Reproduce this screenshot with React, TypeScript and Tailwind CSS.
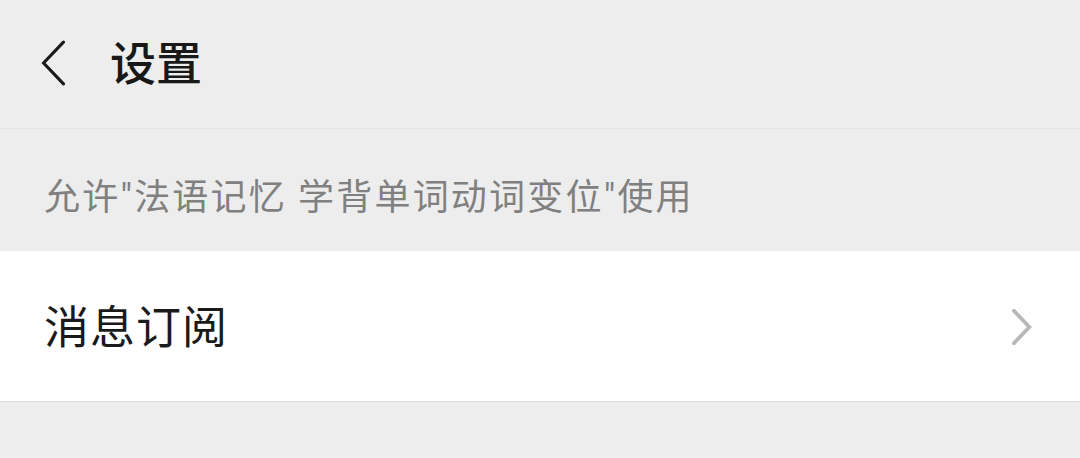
const font = { fontFamily: "Roboto, 'Noto Sans CJK SC', sans-serif" };

// Plain stroked chevron used for the back button and row arrows
const Chevron = ({ dir, className }: { dir: "left" | "right"; className?: string }) => (
  <svg viewBox="0 0 24 44" className={className} fill="none" stroke="currentColor" strokeLinecap="round" strokeLinejoin="miter">
    {dir === "left" ? <polyline points="22,2 3,22 22,42" /> : <polyline points="2,2 21,22 2,42" />}
  </svg>
);

const App: React.FC = () => {
  return (
    <div className="w-[1080px] h-[458px] bg-[#ededed] overflow-hidden" style={font}>
      {/* Top bar */}
      <div className="h-[129px] flex items-center border-b border-[#e2e2e2]">
        <button className="ml-[40px] flex items-center text-[#1a1a1a] -mt-[2px]">
          <Chevron dir="left" className="w-[26px] h-[46px] stroke-[3px]" />
        </button>
        <h1 className="ml-[44px] text-[46px] font-medium text-[#181818] leading-none">设置</h1>
      </div>

      {/* Section caption */}
      <div className="h-[122px] flex items-center pl-[44px] pt-[16px]">
        <p className="text-[36px] tracking-[2.2px] text-[#808080] leading-none">
          允许"法语记忆 学背单词动词变位"使用
        </p>
      </div>

      {/* Settings row */}
      <div className="h-[151px] bg-white border-b border-[#dcdcdc] flex items-center justify-between pl-[44px] pr-[48px]">
        <span className="text-[45px] tracking-[1px] text-[#1a1a1a] leading-none mt-[4px]">消息订阅</span>
        <Chevron dir="right" className="w-[20px] h-[36px] stroke-[4.6px] text-[#b8b8b8] mt-[2px]" />
      </div>
    </div>
  );
};

export default App;
